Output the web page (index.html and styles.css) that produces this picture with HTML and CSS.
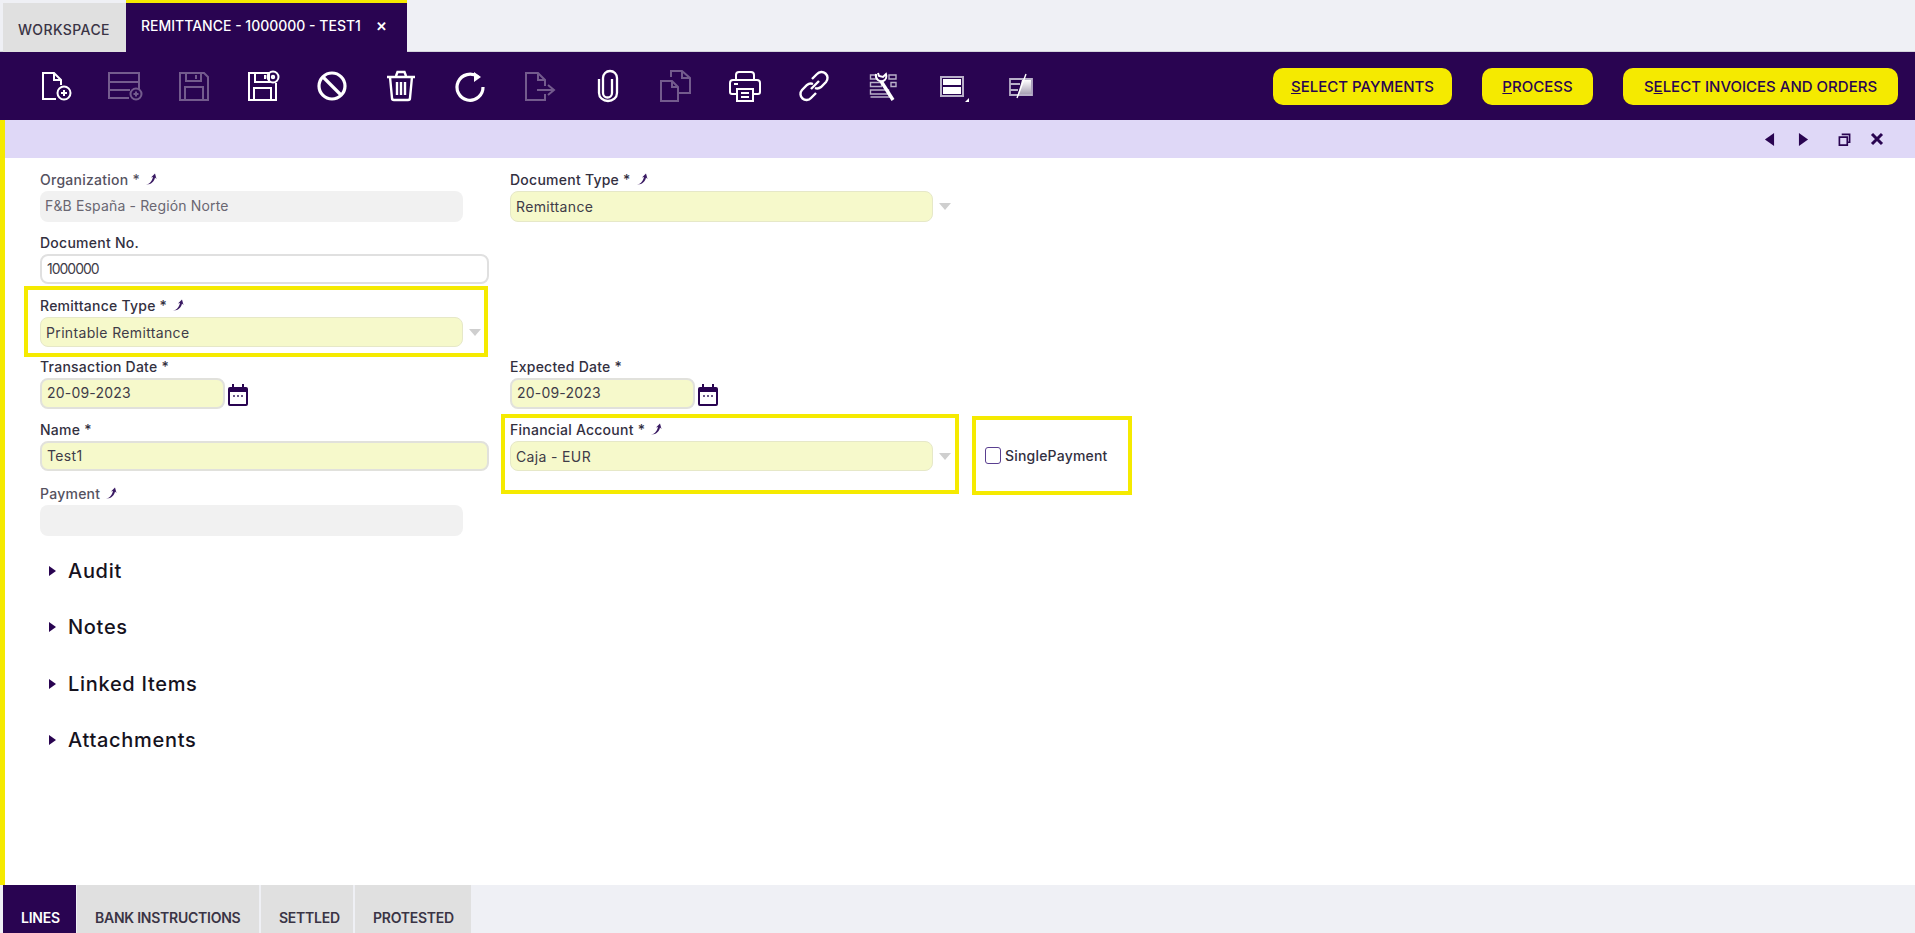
FILE: index.html
```html
<!DOCTYPE html>
<html lang="en">
<head>
  <meta charset="UTF-8">
  <title>Remittance - 1000000 - Test1</title>
  <link rel="stylesheet" href="styles.css">
</head>
<body>
  <svg class="defs" width="0" height="0">
    <defs>
      <linearGradient id="fade" x1="0" y1="0" x2="0" y2="1"><stop offset="0" stop-color="#fff"/><stop offset="1" stop-color="#a9a2b5"/></linearGradient>
    </defs>
    <symbol id="pin" viewBox="0 0 12 12"><path d="M1 11.500C5 11 7 8 8 4L6 4.500 10 .5 11.500 6 10 4.500C9.500 8 6 12 1 11.500Z"/></symbol>
    <symbol id="cal" viewBox="0 0 20 22"><path d="M4 0h2v3h8V0h2v3h2a2 2 0 0 1 2 2v15a2 2 0 0 1-2 2H2a2 2 0 0 1-2-2V5a2 2 0 0 1 2-2h2z" fill="#290451"/><rect x="2" y="8" width="16" height="12" fill="#fff"/><path d="M5 11h2v2H5zM9 11h2v2H9zM13 11h2v2h-2z" fill="#6a5a88"/></symbol>
  </svg>

  <nav class="tabs-top">
    <div class="tab-top">WORKSPACE</div>
    <div class="tab-top tab-top-active">REMITTANCE - 1000000 - TEST1 <span class="tab-close">&#10005;</span></div>
  </nav>

  <div class="toolbar">
    <div class="tool"><svg viewBox="0 0 32 32"><path d="M16 29H3V3h11l7 7v5M14 3v7h7"/><circle cx="24" cy="23" r="6.500"/><path d="M24 20v6M21 23h6"/></svg></div>
    <div class="tool tool-off"><svg viewBox="0 0 32 32"><path d="M20 28H0V3h30v17M0 12h30M0 20h21"/><circle cx="27" cy="24" r="5.500"/><path d="M27 21.500v5M24.500 24h5"/></svg></div>
    <div class="tool tool-off"><svg viewBox="0 0 32 32"><path d="M2 3h24l4 4v23H2zM8 3v8h15V3M18 5v4M7 30V17h18v13"/></svg></div>
    <div class="tool"><svg viewBox="0 0 32 32"><path d="M23 3H2v27h27V13M8 3v9h14V3M18 5v4M7 30V18h17v12"/><circle cx="26" cy="7" r="5.500"/><circle cx="26" cy="7" r="1.200"/></svg></div>
    <div class="tool tool-bold"><svg viewBox="0 0 32 32"><circle cx="16" cy="16" r="13"/><path d="M7 7l18 18"/></svg></div>
    <div class="tool"><svg viewBox="0 0 32 32"><path d="M2 7h28M11 6l1.500-4h7L21 6M5 7l2 21a2 2 0 0 0 2 2h14a2 2 0 0 0 2-2l2-21M12 12v13M16 12v13M20 12v13" stroke-width="2.400"/></svg></div>
    <div class="tool tool-bold"><svg viewBox="0 0 32 32"><path d="M24 7a13 13 0 1 0 5 10"/><path d="M20 2l7 5-7 5z" class="solid"/></svg></div>
    <div class="tool tool-off"><svg viewBox="0 0 32 32"><path d="M22 16V10l-7-7H3v27h19v-6M15 3v7h7M14 20h16M25 15l6 5-6 5"/></svg></div>
    <div class="tool"><svg viewBox="0 0 32 32"><path d="M20 9V23a4.500 4.500 0 0 1-9 0V8a7 7 0 0 1 14 0V23a9 8 0 0 1-18 0V9" stroke-width="2.300"/></svg></div>
    <div class="tool tool-off"><svg viewBox="0 0 32 32"><path d="M1 11h11l6 6v14H1zM12 11v6h6M11 7V1h11l8 7v15H18M22 1v7h8"/></svg></div>
    <div class="tool"><svg viewBox="0 0 32 32"><path d="M7 10V5a3 3 0 0 1 3-3h12a3 3 0 0 1 3 3v5M7 24H3a2 2 0 0 1-2-2V13a3 3 0 0 1 3-3h24a3 3 0 0 1 3 3v9a2 2 0 0 1-2 2h-4M8 19h16v12H8zM12 23h8M12 27h8M5 14h4"/></svg></div>
    <div class="tool"><svg viewBox="0 0 32 32"><path d="M13 19l8-8M14 9l5-5a6 6 0 0 1 9 8l-5 5a6 6 0 0 1-6 1M18 23l-5 5a6 6 0 0 1-9-8l5-5a6 6 0 0 1 6-1" stroke-width="2.400"/></svg></div>
    <div class="tool tool-soft"><svg viewBox="0 0 32 32"><path d="M3.500 5h6v4h-6zM22 5h7v4h-7zM3.500 12.500h11v4h-11zM24 12.500h5v4h-5zM3.500 20h18v4h-18zM3.500 27h20" stroke-width="1.400"/><path d="M14 11l12 19" class="white" stroke-width="3.400"/><path d="M9 4c-1 5 3 8 7 7 3-1 4-4 3-7l-3 3-4-1-1-3" class="white" stroke-width="2"/></svg></div>
    <div class="tool tool-soft"><svg viewBox="0 0 32 32"><rect x="5" y="7" width="22" height="19" stroke-width="2"/><rect x="7" y="9" width="18" height="6" class="solid"/><rect x="7" y="17" width="18" height="7" class="solid"/><path d="M33 28v4h-4z" class="solid"/></svg></div>
    <div class="tool tool-soft"><svg viewBox="0 0 32 32"><path d="M5 9h22v16H5zM5 14h10M5 20h8" stroke-width="1.800"/><path d="M17 10h9v14H13z" fill="url(#fade)" stroke="none"/><path d="M21 4l-9 24" class="white" stroke-width="1.400"/></svg></div>
    <div class="actions">
      <button class="action" type="button"><u>S</u>ELECT PAYMENTS</button>
      <button class="action" type="button"><u>P</u>ROCESS</button>
      <button class="action action-wide" type="button">S<u>E</u>LECT INVOICES AND ORDERS</button>
    </div>
  </div>

  <main class="content">
    <div class="subbar">
      <svg class="sub-icon" viewBox="0 0 12 16"><path d="M11 1v14L1 8z"/></svg>
      <svg class="sub-icon sub-next" viewBox="0 0 12 16"><path d="M1 1v14l10-7z"/></svg>
      <svg class="sub-icon sub-max" viewBox="0 0 14 14"><path d="M4 1.500h8.500V10H10M1.500 4.500H10V13H1.500z" fill="none" stroke="#290451" stroke-width="1.800"/></svg>
      <svg class="sub-icon sub-close" viewBox="0 0 14 14"><path d="M2 2l10 10M12 2L2 12" fill="none" stroke="#290451" stroke-width="3"/></svg>
    </div>

    <form class="form">
      <div class="field">
        <label class="label label-off">Organization * <svg class="pin"><use href="#pin"/></svg></label>
        <div class="box box-off box-org">F&amp;B España - Región Norte</div>
      </div>
      <div class="field">
        <label class="label">Document Type * <svg class="pin"><use href="#pin"/></svg></label>
        <div class="select-wrap"><div class="box box-select box-doctype">Remittance</div><span class="arrow"></span></div>
      </div>
      <div class="field field-r2 field-wide">
        <label class="label">Document No.</label>
        <div class="box box-text box-white">1000000</div>
      </div>
      <div class="field field-r3 field-mark mark-type">
        <label class="label">Remittance Type * <svg class="pin"><use href="#pin"/></svg></label>
        <div class="select-wrap"><div class="box box-select">Printable Remittance</div><span class="arrow"></span></div>
      </div>
      <div class="field field-r4">
        <label class="label">Transaction Date *</label>
        <div class="date-wrap"><div class="box box-text box-date">20-09-2023</div><svg class="cal"><use href="#cal"/></svg></div>
      </div>
      <div class="field field-r4">
        <label class="label">Expected Date *</label>
        <div class="date-wrap"><div class="box box-text box-date">20-09-2023</div><svg class="cal"><use href="#cal"/></svg></div>
      </div>
      <div class="field field-r4 field-wide">
        <label class="label">Name *</label>
        <div class="box box-text">Test1</div>
      </div>
      <div class="field field-r4 field-mark mark-account">
        <label class="label">Financial Account * <svg class="pin"><use href="#pin"/></svg></label>
        <div class="select-wrap"><div class="box box-select">Caja - EUR</div><span class="arrow"></span></div>
      </div>
      <div class="field-check field-mark mark-single">
        <span class="check"></span><span class="check-label">SinglePayment</span>
      </div>
      <div class="field field-pay">
        <label class="label label-off">Payment <svg class="pin"><use href="#pin"/></svg></label>
        <div class="box box-off"></div>
      </div>
    </form>

    <section class="sections">
      <h3 class="section"><span class="section-arrow"></span>Audit</h3>
      <h3 class="section"><span class="section-arrow"></span>Notes</h3>
      <h3 class="section"><span class="section-arrow"></span>Linked Items</h3>
      <h3 class="section"><span class="section-arrow"></span>Attachments</h3>
    </section>
  </main>

  <nav class="tabs-bottom">
    <div class="tab-bottom tab-bottom-active">LINES</div>
    <div class="tab-bottom">BANK INSTRUCTIONS</div>
    <div class="tab-bottom">SETTLED</div>
    <div class="tab-bottom">PROTESTED</div>
  </nav>
</body>
</html>
```

FILE: styles.css
```css
*, *::after { box-sizing: border-box; }
html, body { height: 100%; }
body { margin: 0; height: 933px; overflow: hidden; display: flex; flex-direction: column; background: #fff; font-family: "Inter", "Noto Sans", sans-serif; color: #333; font-size: 14px; }
.defs { position: absolute; }

/* top tabs */
.tabs-top { height: 52px; flex: none; display: flex; align-items: flex-end; padding-left: 3px; background: #eff0f5; border-bottom: 1px solid #d4d4dc; }
.tab-top { height: 49px; padding: 0 15px; width: 123px; margin-bottom: -1px; background: #e0e0e0; color: #3a3445; font-size: 14px; font-weight: 500; letter-spacing: .4px; line-height: 53px; white-space: nowrap; }
.tab-top-active { width: 281px; height: 52px; background: #290451; border-top: 3px solid #f5ea00; color: #fff; letter-spacing: 0; line-height: 45px; padding-left: 15px; }
.tab-close { margin-left: 11px; font-size: 13px; font-weight: 700; }

/* toolbar */
.toolbar { height: 68px; flex: none; display: flex; align-items: center; padding: 0 17px 0 22px; background: #290451; }
.tool { width: 68.900px; flex: none; display: flex; justify-content: center; }
.tool svg { width: 32px; height: 32px; overflow: visible; fill: none; stroke: #fff; stroke-width: 2; }
.tool-bold svg { stroke-width: 3.200; }
.tool-off svg { opacity: .35; }
.tool-soft svg { stroke: #b9b0c9; }
.tool .solid { fill: #fff; stroke: none; }
.tool .white { stroke: #fff; }
.actions { margin-left: auto; display: flex; gap: 30px; }
.action { width: 179px; height: 37px; border: 0; border-radius: 10px; background: #f5ea00; color: #290451; font: 500 15px "Inter", sans-serif; padding: 0; white-space: nowrap; }
.action + .action { width: 111px; }
.action + .action.action-wide { width: 275px; }

/* main area */
.content { flex: 1; min-height: 0; border-left: 5px solid #f5ea00; }
.subbar { height: 38px; background: #dfd8f7; display: flex; align-items: center; padding-left: 1759px; }
.sub-icon { width: 11px; height: 15px; fill: #290451; flex: none; }
.sub-next { margin-left: 23px; }
.sub-max { width: 13px; height: 13px; margin-left: 29px; }
.sub-close { width: 14px; height: 14px; margin-left: 19px; }

/* form */
.form { display: grid; grid-template-columns: 470px 470px 200px; grid-template-rows: 63px 63px 61px 63px 64px 56px; padding: 12px 0 0 35px; }
.field { position: relative; }
.field-r2 { grid-column: 1; grid-row: 2; }
.field-r3 { grid-column: 1; grid-row: 3; }
.field-r4 { grid-row: 4; }
.field-wide.field-r4 { grid-column: 1; grid-row: 5; }
.mark-account { grid-column: 2; grid-row: 5; }
.field-pay { grid-column: 1; grid-row: 6; }
.label { display: flex; align-items: center; gap: 4px; height: 18px; margin-bottom: 3px; font-weight: 500; font-size: 14px; letter-spacing: .25px; color: #33303f; }
.label-off { color: #55525f; }
.pin { width: 12px; height: 12px; fill: #3a1a63; margin-left: 1px; }
.box { height: 30px; padding: 0 5px; border-radius: 8px; line-height: 29px; font-size: 14px; letter-spacing: .35px; color: #3f3c48; }
.box-off { width: 423px; height: 31px; background: #f1f1f1; color: #6a6772; }
.box-org { letter-spacing: .15px; }
.box-text { width: 449px; padding: 0 5px; background: #f6f9cb; border: 2px solid #e1e1dc; margin-top: 3px; line-height: 25px; }
.box-white { background: #fff; border-color: #e0e0e0; height: 30px; margin-top: 3px; letter-spacing: -1px; }
.box-date { width: 185px; margin-top: 0; height: 31px; letter-spacing: .2px; }
.box-select { width: 423px; height: 30px; background: #f6f9cb; border: 1px solid #e6e8c8; }
.box-doctype { height: 31px; }
.select-wrap { display: flex; align-items: center; }
.arrow { margin-left: 6px; border: 6px solid transparent; border-top: 7px solid #cfcfcf; border-bottom: 0; }
.date-wrap { display: flex; align-items: center; gap: 3px; margin-top: 3px; }
.cal { width: 20px; height: 22px; margin-top: 3px; }

/* yellow marks over the fields */
.field-mark { position: relative; }
.field-mark::after { content: ""; position: absolute; border: 4px solid #f5ea00; pointer-events: none; }
.mark-type::after { top: -10px; left: -16px; width: 464px; height: 71px; }
.mark-account::after { top: -6px; left: -9px; width: 458px; height: 80px; }
.mark-single::after { top: -4px; left: -13px; width: 160px; height: 79px; }

.field-check { grid-column: 3; grid-row: 5; align-self: start; display: flex; align-items: center; gap: 4px; height: 71px; }
.mark-single { margin-left: 5px; }
.check { width: 16px; height: 17px; border: 1px solid #5a3f90; border-radius: 3px; background: #fff; }
.check-label { font-size: 14px; font-weight: 500; letter-spacing: .2px; color: #33303f; }

/* collapsed sections */
.sections { padding: 3px 0 0 44px; }
.section { display: flex; align-items: center; height: 56.300px; margin: 0; font-size: 20px; font-weight: 500; letter-spacing: .7px; color: #15121d; }
.section-arrow { width: 0; height: 0; margin-right: 12px; border-left: 7px solid #290451; border-top: 5px solid transparent; border-bottom: 5px solid transparent; }

/* bottom tabs */
.tabs-bottom { height: 48px; flex: none; display: flex; gap: 2px; padding-left: 3px; background: #eff0f5; }
.tab-bottom { padding: 20px 18px 0; background: #e0e0e0; color: #3a3445; font-size: 14px; font-weight: 600; line-height: 26px; white-space: nowrap; width: 92px; letter-spacing: -.25px; }
.tab-bottom:nth-child(1) { width: 73px; margin-right: -1px; }
.tab-bottom:nth-child(2) { width: 182px; }
.tab-bottom:nth-child(4) { width: 116px; }
.tab-bottom-active { background: #290451; color: #fff; }
```
